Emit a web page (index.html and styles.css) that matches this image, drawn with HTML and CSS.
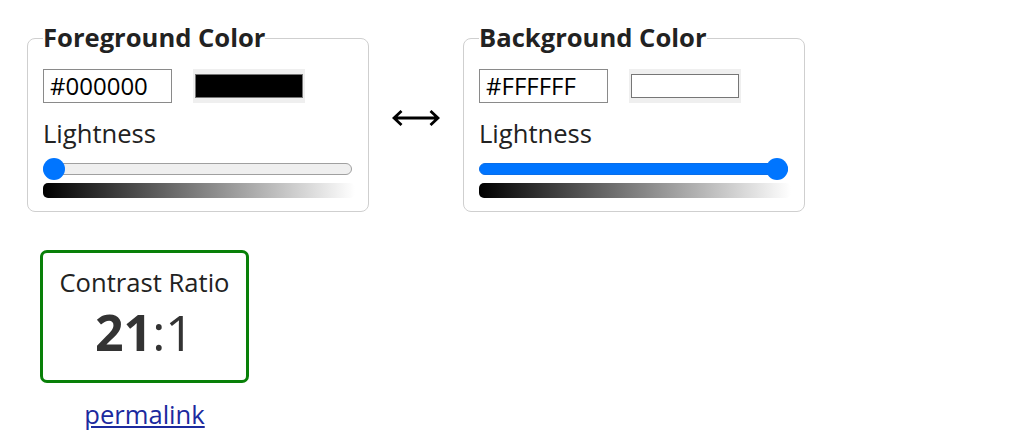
FILE: index.html
```html
<!DOCTYPE html>
<html lang="en">
<head>
<meta charset="utf-8">
<title>Contrast Checker</title>
<link rel="stylesheet" href="styles.css">
</head>
<body>
<main class="page">
  <div class="pickers">
    <fieldset class="picker">
      <legend class="picker-title">Foreground Color</legend>
      <div class="color-row">
        <div class="hex-input">#000000</div>
        <div class="swatch"><div class="swatch-inner swatch-black"></div></div>
      </div>
      <div class="label">Lightness</div>
      <div class="slider">
        <div class="track"></div>
        <div class="thumb thumb-start"></div>
      </div>
      <div class="gradient"></div>
    </fieldset>

    <div class="swap" aria-label="swap colors">
      <svg width="48" height="16" viewBox="0 0 48 16">
        <path d="M2 8 H46 M9.5 1 L2 8 L9.5 15 M38.5 1 L46 8 L38.5 15" fill="none" stroke="#000" stroke-width="2.8" stroke-linecap="butt" stroke-linejoin="miter"/>
      </svg>
    </div>

    <fieldset class="picker">
      <legend class="picker-title">Background Color</legend>
      <div class="color-row">
        <div class="hex-input">#FFFFFF</div>
        <div class="swatch"><div class="swatch-inner swatch-white"></div></div>
      </div>
      <div class="label">Lightness</div>
      <div class="slider">
        <div class="track track-filled"></div>
        <div class="thumb thumb-end"></div>
      </div>
      <div class="gradient"></div>
    </fieldset>
  </div>

  <div class="result">
    <div class="ratio-box">
      <div class="ratio-title">Contrast Ratio</div>
      <div class="ratio-value"><b>21</b>:1</div>
    </div>
    <a class="permalink" href="#">permalink</a>
  </div>
</main>
</body>
</html>
```

FILE: styles.css
```css
* { box-sizing: border-box; }

html, body {
  margin: 0;
  padding: 0;
  background: #fff;
}

body {
  font-family: "Open Sans", "Noto Sans", "DejaVu Sans", sans-serif;
  font-size: 25.6px;
  color: #222;
}

.page {
  padding: 24px 0 0 27px;
}

.pickers {
  display: flex;
  align-items: center;
  gap: 23px;
}

.picker {
  width: 342px;
  margin: 0;
  padding: 0 13px 13px 15px;
  border: 1px solid #cfcfcf;
  border-radius: 8px;
}

.picker-title {
  padding: 0;
  font-weight: 700;
  font-size: 25.6px;
  line-height: 28px;
  color: #222;
}

.color-row {
  display: flex;
  align-items: center;
  gap: 21px;
  margin-top: 17px;
}

.hex-input {
  width: 129px;
  height: 34px;
  border: 1px solid #8a8a8a;
  padding: 0 6px;
  font-size: 24px;
  line-height: 32px;
  color: #000;
}

.swatch {
  width: 112px;
  height: 34px;
  background: #efefef;
  padding: 5px 2px;
}

.swatch-inner {
  width: 100%;
  height: 100%;
  border: 1px solid #767676;
}

.swatch-black { background: #000; }
.swatch-white { background: #fff; }

.label {
  margin-top: 15px;
  line-height: 32px;
}

.slider {
  position: relative;
  width: 309px;
  height: 22px;
  margin-top: 8px;
  display: flex;
  align-items: center;
}

.track {
  width: 100%;
  height: 12px;
  border: 1px solid #a0a0a0;
  border-radius: 6px;
  background: #efefef;
}

.track-filled {
  background: #0075ff;
  border-color: #0a6ee8;
}

.thumb {
  position: absolute;
  top: 0;
  width: 22px;
  height: 22px;
  border-radius: 50%;
  background: #0075ff;
}

.thumb-start { left: 0; }
.thumb-end { right: 0; }

.gradient {
  width: 312px;
  height: 15px;
  margin-top: 3px;
  border-radius: 5px;
  background: linear-gradient(to right, #000, #fff);
}

.swap {
  display: flex;
  align-items: center;
  width: 48px;
  height: 16px;
}

.swap svg { display: block; }

.result {
  display: inline-flex;
  flex-direction: column;
  align-items: center;
  margin: 38px 0 0 13px;
}

.ratio-box {
  width: 209px;
  height: 133px;
  border: 3px solid #088008;
  border-radius: 7px;
  padding-top: 14px;
  text-align: center;
}

.ratio-title {
  line-height: 32px;
  color: #222;
}

.ratio-value {
  margin-top: 5px;
  font-size: 50px;
  line-height: 56px;
  color: #333;
}

.ratio-value b { font-weight: 700; }

.permalink {
  margin-top: 16px;
  line-height: 32px;
  color: #1c2a9e;
  text-decoration: underline;
}
```
